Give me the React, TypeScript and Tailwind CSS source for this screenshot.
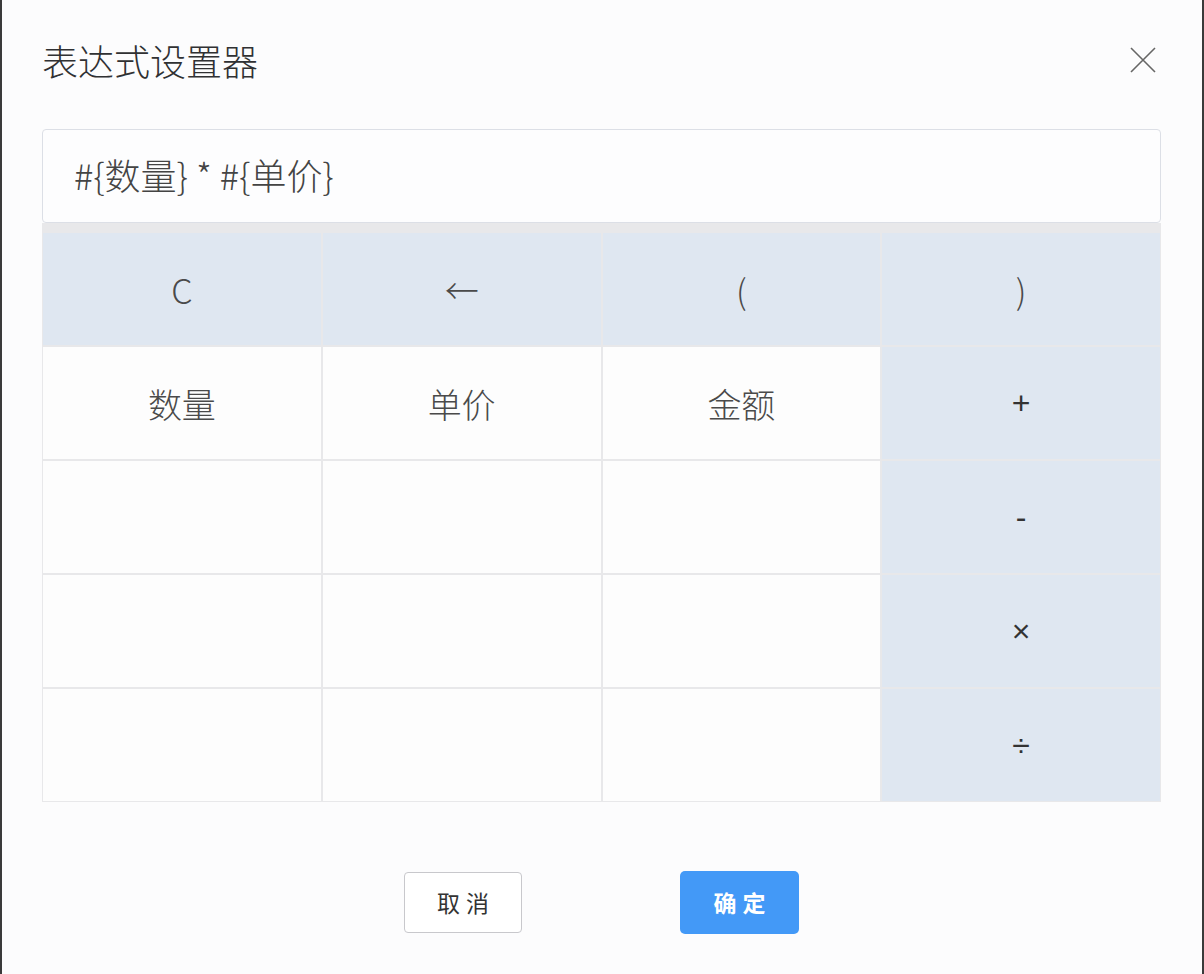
import React from "react"

const font = { fontFamily: '"Noto Sans CJK SC", "Noto Sans", sans-serif' }

type Cell = { label: string; op?: boolean; small?: boolean }

const cells: Cell[] = [
  { label: "C", op: true },
  { label: "←", op: true },
  { label: "(", op: true },
  { label: ")", op: true },
  { label: "数量" },
  { label: "单价" },
  { label: "金额" },
  { label: "+", op: true, small: true },
  { label: "" },
  { label: "" },
  { label: "" },
  { label: "-", op: true, small: true },
  { label: "" },
  { label: "" },
  { label: "" },
  { label: "×", op: true, small: true },
  { label: "" },
  { label: "" },
  { label: "" },
  { label: "÷", op: true, small: true },
]

export default function App() {
  return (
    <div
      style={font}
      className="h-[974px] bg-[#fcfcfd] border-x-2 border-[#3a3a3a] flex flex-col pl-[40px] pr-[41px]"
    >
      {/* Header */}
      <div className="flex items-center justify-between pt-[41px]">
        <h1 className="text-[36px] leading-[38px] text-[#303133] font-light">表达式设置器</h1>
        <button className="mr-[4px] text-[#666]" aria-label="close">
          <svg width="28" height="28" viewBox="0 0 28 28" fill="none" stroke="currentColor" strokeWidth="1.6">
            <path d="M2 2 L26 26 M26 2 L2 26" />
          </svg>
        </button>
      </div>

      {/* Expression input */}
      <div className="mt-[50px] h-[94px] border border-[#dcdfe6] rounded-[4px] bg-[#fdfdfe] flex items-center pl-[31px] pb-[4px]">
        <span className="text-[36px] text-[#444] font-light">#{"{"}数量{"}"} * #{"{"}单价{"}"}</span>
      </div>

      {/* Keypad */}
      <div className="grid grid-cols-4 gap-[2px] bg-[#e8e8ea] pt-[10px] px-[1px] pb-[1px]">
        {cells.map((c, i) => (
          <div
            key={i}
            className={`h-[112px] flex items-center justify-center ${
              c.op ? "bg-[#dfe7f1]" : "bg-[#fdfdfd]"
            } ${
              c.small
                ? "text-[32px] text-[#333] font-['Liberation_Sans',sans-serif]"
                : "text-[34px] text-[#4a4a4a] font-light"
            }`}
          >
            {c.label}
          </div>
        ))}
      </div>

      {/* Footer */}
      <div className="mt-[69px] flex justify-center items-center gap-[158px]">
        <button className="w-[118px] h-[61px] border border-[#c8c8cc] rounded-[4px] bg-white text-[23px] text-[#333] tracking-[6px] pl-[6px]">
          取消
        </button>
        <button className="w-[119px] h-[63px] rounded-[5px] bg-[#4399f7] text-[23px] font-bold text-white tracking-[6px] pl-[6px]">
          确定
        </button>
      </div>
    </div>
  )
}
